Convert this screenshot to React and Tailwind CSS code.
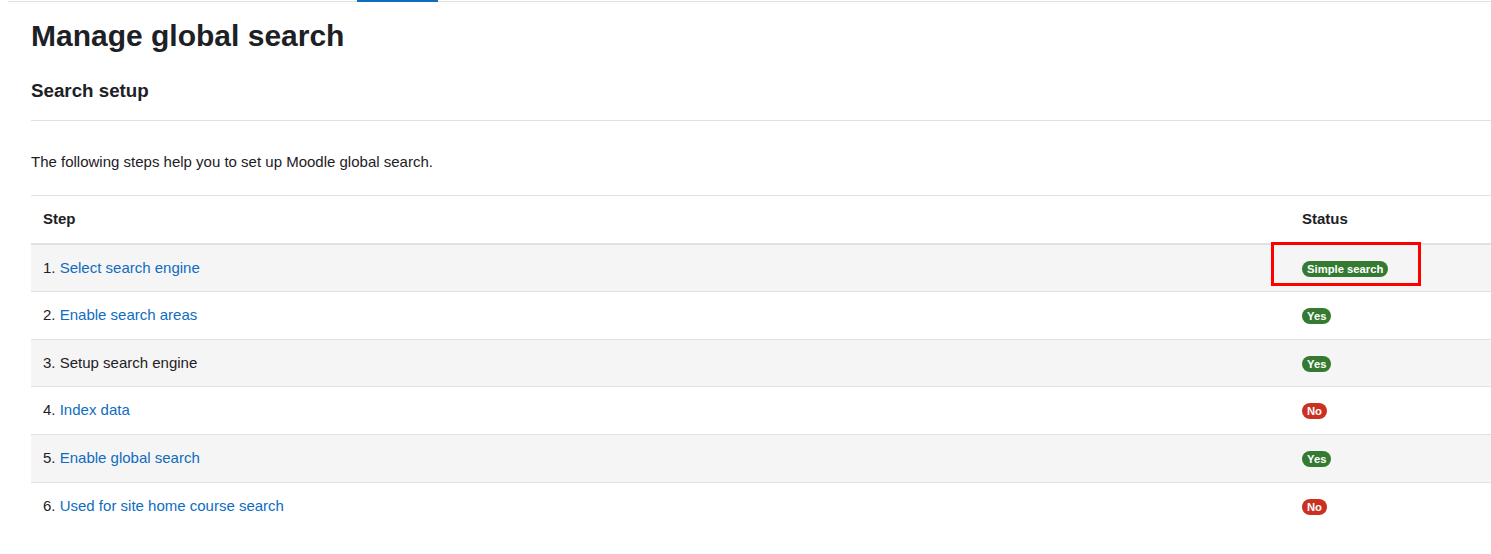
import React from 'react'

const rows = [
    { n: 1, label: "Select search engine", link: true, status: "Simple search", ok: true, boxed: true },
    { n: 2, label: "Enable search areas", link: true, status: "Yes", ok: true },
    { n: 3, label: "Setup search engine", link: false, status: "Yes", ok: true },
    { n: 4, label: "Index data", link: true, status: "No", ok: false },
    { n: 5, label: "Enable global search", link: true, status: "Yes", ok: true },
    { n: 6, label: "Used for site home course search", link: true, status: "No", ok: false },
]

const Badge = ({ ok, children }) => (
    <span
        className={
            "inline-block rounded-full px-[5px] text-[11.25px] font-bold leading-[16px] text-white " +
            (ok ? "bg-[#357a32]" : "bg-[#ca3120]")
        }
    >
        {children}
    </span>
)

const App = () => {
    return (
        <div
            className="w-full min-h-screen bg-white text-[#1d2125] text-[15px] leading-[22.5px]"
            style={{ fontFamily: '"Liberation Sans", Arial, sans-serif' }}
        >
            {/* top tabs line */}
            <div className="pl-[8px]">
                <div className="h-[2px] border-b border-[#dee2e6] relative">
                    <div className="absolute left-[349px] top-0 w-[81px] h-[2px] bg-[#0f6cbf]" />
                </div>
            </div>

            <div className="pl-[31px]">
                <h2 className="text-[30px] leading-[36px] font-bold mt-[16px]">Manage global search</h2>

                <h3 className="text-[18.75px] leading-[22.5px] font-bold mt-[26px]">Search setup</h3>

                <div className="border-b border-[#dee2e6] mt-[17px]" />

                <p className="mt-[30px]">The following steps help you to set up Moodle global search.</p>

                <table className="w-full mt-[22px] border-collapse">
                    <thead>
                        <tr className="border-t border-[#dee2e6] border-b-2">
                            <th className="text-left font-bold px-[12px] py-[12px] h-[48px]">Step</th>
                            <th className="text-left font-bold px-[12px] py-[12px] w-[201px]">Status</th>
                        </tr>
                    </thead>
                    <tbody>
                        {rows.map((r, i) => (
                            <tr
                                key={r.n}
                                className={
                                    (i === 0 ? "" : "border-t border-[#dee2e6] ") +
                                    (i % 2 === 0 ? "bg-[#f5f5f5]" : "bg-white")
                                }
                            >
                                <td className="px-[12px] py-[12px] h-[47.7px]">
                                    {r.n}.{" "}
                                    {r.link ? (
                                        <a href="#" className="text-[#0f6cbf]">{r.label}</a>
                                    ) : (
                                        r.label
                                    )}
                                </td>
                                <td className="px-[12px] py-[12px] relative">
                                    <Badge ok={r.ok}>{r.status}</Badge>
                                    {r.boxed && (
                                        <div className="absolute left-[-19px] top-[-3px] w-[150px] h-[44px] border-[3px] border-[#ff0000]" />
                                    )}
                                </td>
                            </tr>
                        ))}
                    </tbody>
                </table>
            </div>
        </div>
    )
}

export default App
